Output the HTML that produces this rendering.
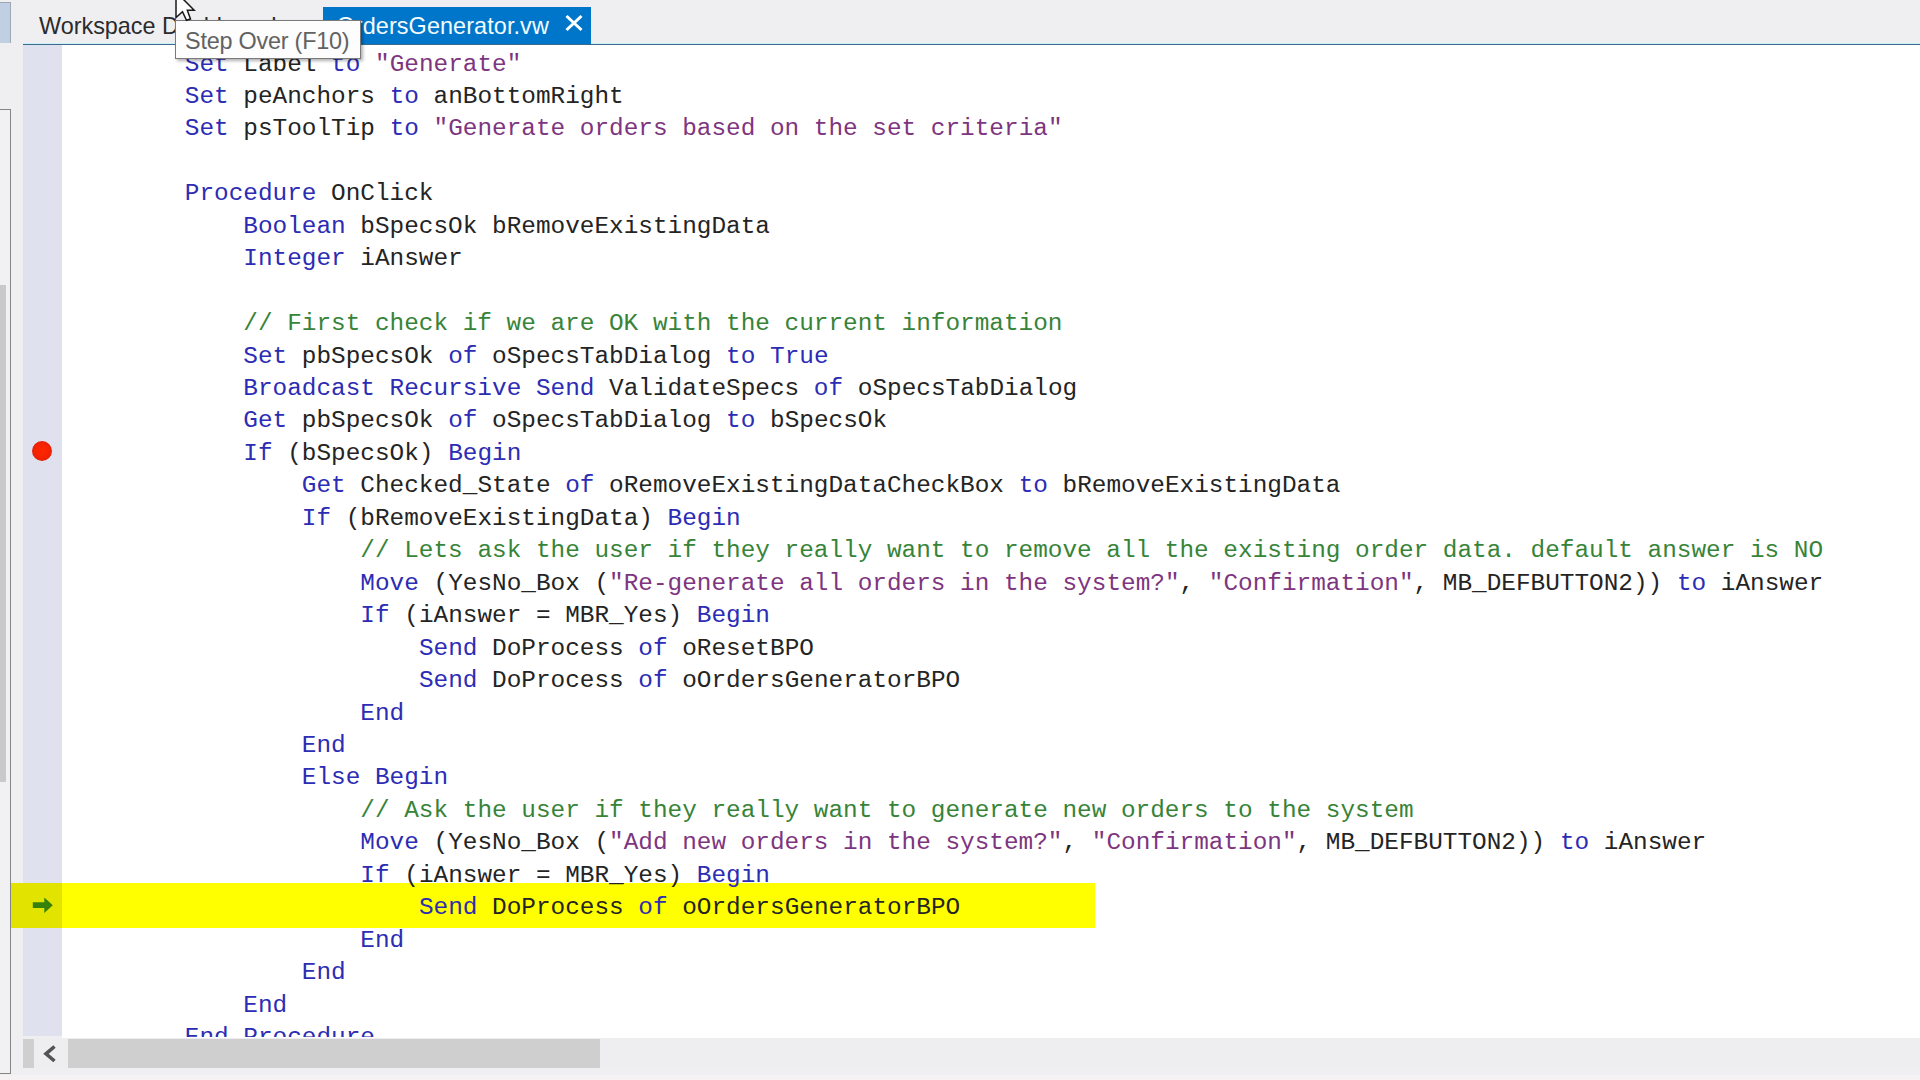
<!DOCTYPE html>
<html><head><meta charset="utf-8">
<style>
html,body{margin:0;padding:0;}
body{width:1920px;height:1080px;overflow:hidden;position:relative;background:#efeff2;font-family:"Liberation Sans",sans-serif;}
.abs{position:absolute;}
#editor{position:absolute;left:62px;top:45px;width:1858px;height:993px;background:#ffffff;}
#gutter{position:absolute;left:23px;top:45px;width:39px;height:991px;background:#dfe1ef;}
#code{position:absolute;left:0;top:0;width:1920px;height:1037px;overflow:hidden;}
.ln{position:absolute;white-space:pre;font-family:"Liberation Mono",monospace;font-size:24.38px;line-height:32px;color:#1e1e1e;}
.k{color:#2c2cb4;}
.s{color:#7e3580;}
.c{color:#378439;}
.i{color:#242424;}
</style></head><body>
<!-- left panel -->
<div class="abs" style="left:0;top:2px;width:10px;height:40px;background:#c0d0e2;border-top:1px solid #9ca8b6;border-right:1px solid #9ca8b6;"></div>
<div class="abs" style="left:0;top:109px;width:10px;height:963px;border-right:1px solid #858585;border-top:1px solid #858585;border-bottom:1px solid #858585;background:#f1f1f3;"></div>
<div class="abs" style="left:0;top:285px;width:6px;height:497px;background:#c9c9c9;"></div>

<!-- tab bar -->
<div class="abs" style="left:39px;top:9.5px;font-size:23.4px;line-height:32px;color:#2b2b2b;white-space:pre;">Workspace Dashboard</div>
<div class="abs" style="left:23px;top:43px;width:1897px;height:1px;background:#cdeff8;"></div>
<div class="abs" style="left:323px;top:6.5px;width:267.5px;height:37.5px;background:#0076cb;"></div>
<div class="abs" style="left:336.5px;top:10px;font-size:23.4px;line-height:32px;color:#f4fcff;letter-spacing:0.1px;white-space:pre;">OrdersGenerator.vw</div>
<svg class="abs" style="left:563px;top:13px" width="22" height="20" viewBox="0 0 22 20"><path d="M3.5 3 L18.5 17 M18.5 3 L3.5 17" stroke="#ffffff" stroke-width="3" fill="none"/></svg>

<div class="abs" style="left:23px;top:44px;width:1897px;height:1px;background:#3a6b8c;"></div>
<!-- editor -->
<div id="editor"></div>
<div id="gutter"></div>

<!-- current line highlight -->
<div class="abs" style="left:11px;top:883px;width:1084px;height:45px;background:#ffff00;"></div>
<div class="abs" style="left:11px;top:883px;width:51px;height:45px;background:#e3e300;"></div>
<svg class="abs" style="left:30px;top:895px" width="26" height="20" viewBox="0 0 26 20"><path d="M2.8 7.2 H14.3 V2.5 L22.8 10.3 L14.3 18 V13 H2.8 Z" fill="#36800c"/></svg>

<!-- breakpoint -->
<div class="abs" style="left:32px;top:441px;width:20px;height:20px;border-radius:50%;background:radial-gradient(circle at 50% 50%,#ff2600 0%,#f52200 50%,#d82010 80%,#a02018 100%);"></div>

<div id="code">
<div class="ln" style="top:48.50px;left:184.80px"><span class="k">Set</span> <span class="i">Label</span> <span class="k">to</span> <span class="s">&quot;Generate&quot;</span></div>
<div class="ln" style="top:80.95px;left:184.80px"><span class="k">Set</span> <span class="i">peAnchors</span> <span class="k">to</span> <span class="i">anBottomRight</span></div>
<div class="ln" style="top:113.40px;left:184.80px"><span class="k">Set</span> <span class="i">psToolTip</span> <span class="k">to</span> <span class="s">&quot;Generate orders based on the set criteria&quot;</span></div>
<div class="ln" style="top:178.30px;left:184.80px"><span class="k">Procedure</span> <span class="i">OnClick</span></div>
<div class="ln" style="top:210.75px;left:243.32px"><span class="k">Boolean</span> <span class="i">bSpecsOk bRemoveExistingData</span></div>
<div class="ln" style="top:243.20px;left:243.32px"><span class="k">Integer</span> <span class="i">iAnswer</span></div>
<div class="ln" style="top:308.10px;left:243.32px"><span class="c">// First check if we are OK with the current information</span></div>
<div class="ln" style="top:340.55px;left:243.32px"><span class="k">Set</span> <span class="i">pbSpecsOk</span> <span class="k">of</span> <span class="i">oSpecsTabDialog</span> <span class="k">to</span> <span class="k">True</span></div>
<div class="ln" style="top:373.00px;left:243.32px"><span class="k">Broadcast</span> <span class="k">Recursive</span> <span class="k">Send</span> <span class="i">ValidateSpecs</span> <span class="k">of</span> <span class="i">oSpecsTabDialog</span></div>
<div class="ln" style="top:405.45px;left:243.32px"><span class="k">Get</span> <span class="i">pbSpecsOk</span> <span class="k">of</span> <span class="i">oSpecsTabDialog</span> <span class="k">to</span> <span class="i">bSpecsOk</span></div>
<div class="ln" style="top:437.90px;left:243.32px"><span class="k">If</span> <span class="i">(bSpecsOk)</span> <span class="k">Begin</span></div>
<div class="ln" style="top:470.35px;left:301.84px"><span class="k">Get</span> <span class="i">Checked_State</span> <span class="k">of</span> <span class="i">oRemoveExistingDataCheckBox</span> <span class="k">to</span> <span class="i">bRemoveExistingData</span></div>
<div class="ln" style="top:502.80px;left:301.84px"><span class="k">If</span> <span class="i">(bRemoveExistingData)</span> <span class="k">Begin</span></div>
<div class="ln" style="top:535.25px;left:360.36px"><span class="c">// Lets ask the user if they really want to remove all the existing order data. default answer is NO</span></div>
<div class="ln" style="top:567.70px;left:360.36px"><span class="k">Move</span> <span class="i">(YesNo_Box (</span><span class="s">&quot;Re-generate all orders in the system?&quot;</span><span class="i">, </span><span class="s">&quot;Confirmation&quot;</span><span class="i">, MB_DEFBUTTON2))</span> <span class="k">to</span> <span class="i">iAnswer</span></div>
<div class="ln" style="top:600.15px;left:360.36px"><span class="k">If</span> <span class="i">(iAnswer = MBR_Yes)</span> <span class="k">Begin</span></div>
<div class="ln" style="top:632.60px;left:418.88px"><span class="k">Send</span> <span class="i">DoProcess</span> <span class="k">of</span> <span class="i">oResetBPO</span></div>
<div class="ln" style="top:665.05px;left:418.88px"><span class="k">Send</span> <span class="i">DoProcess</span> <span class="k">of</span> <span class="i">oOrdersGeneratorBPO</span></div>
<div class="ln" style="top:697.50px;left:360.36px"><span class="k">End</span></div>
<div class="ln" style="top:729.95px;left:301.84px"><span class="k">End</span></div>
<div class="ln" style="top:762.40px;left:301.84px"><span class="k">Else</span> <span class="k">Begin</span></div>
<div class="ln" style="top:794.85px;left:360.36px"><span class="c">// Ask the user if they really want to generate new orders to the system</span></div>
<div class="ln" style="top:827.30px;left:360.36px"><span class="k">Move</span> <span class="i">(YesNo_Box (</span><span class="s">&quot;Add new orders in the system?&quot;</span><span class="i">, </span><span class="s">&quot;Confirmation&quot;</span><span class="i">, MB_DEFBUTTON2))</span> <span class="k">to</span> <span class="i">iAnswer</span></div>
<div class="ln" style="top:859.75px;left:360.36px"><span class="k">If</span> <span class="i">(iAnswer = MBR_Yes)</span> <span class="k">Begin</span></div>
<div class="ln" style="top:892.20px;left:418.88px"><span class="k">Send</span> <span class="i">DoProcess</span> <span class="k">of</span> <span class="i">oOrdersGeneratorBPO</span></div>
<div class="ln" style="top:924.65px;left:360.36px"><span class="k">End</span></div>
<div class="ln" style="top:957.10px;left:301.84px"><span class="k">End</span></div>
<div class="ln" style="top:989.55px;left:243.32px"><span class="k">End</span></div>
<div class="ln" style="top:1022.00px;left:184.80px"><span class="k">End_Procedure</span></div>
</div>

<!-- horizontal scrollbar -->
<div class="abs" style="left:23px;top:1038px;width:1897px;height:31px;background:#eeeef1;"></div>
<div class="abs" style="left:0;top:1075px;width:1920px;height:5px;background:#f4f2f3;"></div>
<div class="abs" style="left:23px;top:1039px;width:11px;height:29px;background:#cfcfd0;"></div>
<svg class="abs" style="left:40px;top:1043px" width="20" height="22" viewBox="0 0 20 22"><path d="M14.5 3.5 L6 10.8 L14.5 18" stroke="#535353" stroke-width="3.6" fill="none"/></svg>
<div class="abs" style="left:68px;top:1039px;width:532px;height:29px;background:#cfcfcf;"></div>

<!-- tooltip -->
<div class="abs" style="left:175px;top:20px;width:184px;height:37px;background:#fdfdfd;border:1px solid #7a7a7a;box-shadow:2px 2px 3px rgba(0,0,0,0.3);"></div>
<div class="abs" style="left:185px;top:25px;font-size:23.4px;line-height:32px;color:#626262;letter-spacing:-0.22px;white-space:pre;">Step Over (F10)</div>

<!-- mouse cursor -->
<svg class="abs" style="left:170px;top:-12px" width="30" height="40" viewBox="0 0 30 40"><path d="M6 4 L6 29.5 L12.5 23.7 L16.5 32.3 L20.5 31 L17.3 22.3 L24.2 22.2 Z" fill="#ffffff" stroke="#1a1a1a" stroke-width="1.5" stroke-linejoin="miter"/></svg>
</body></html>
